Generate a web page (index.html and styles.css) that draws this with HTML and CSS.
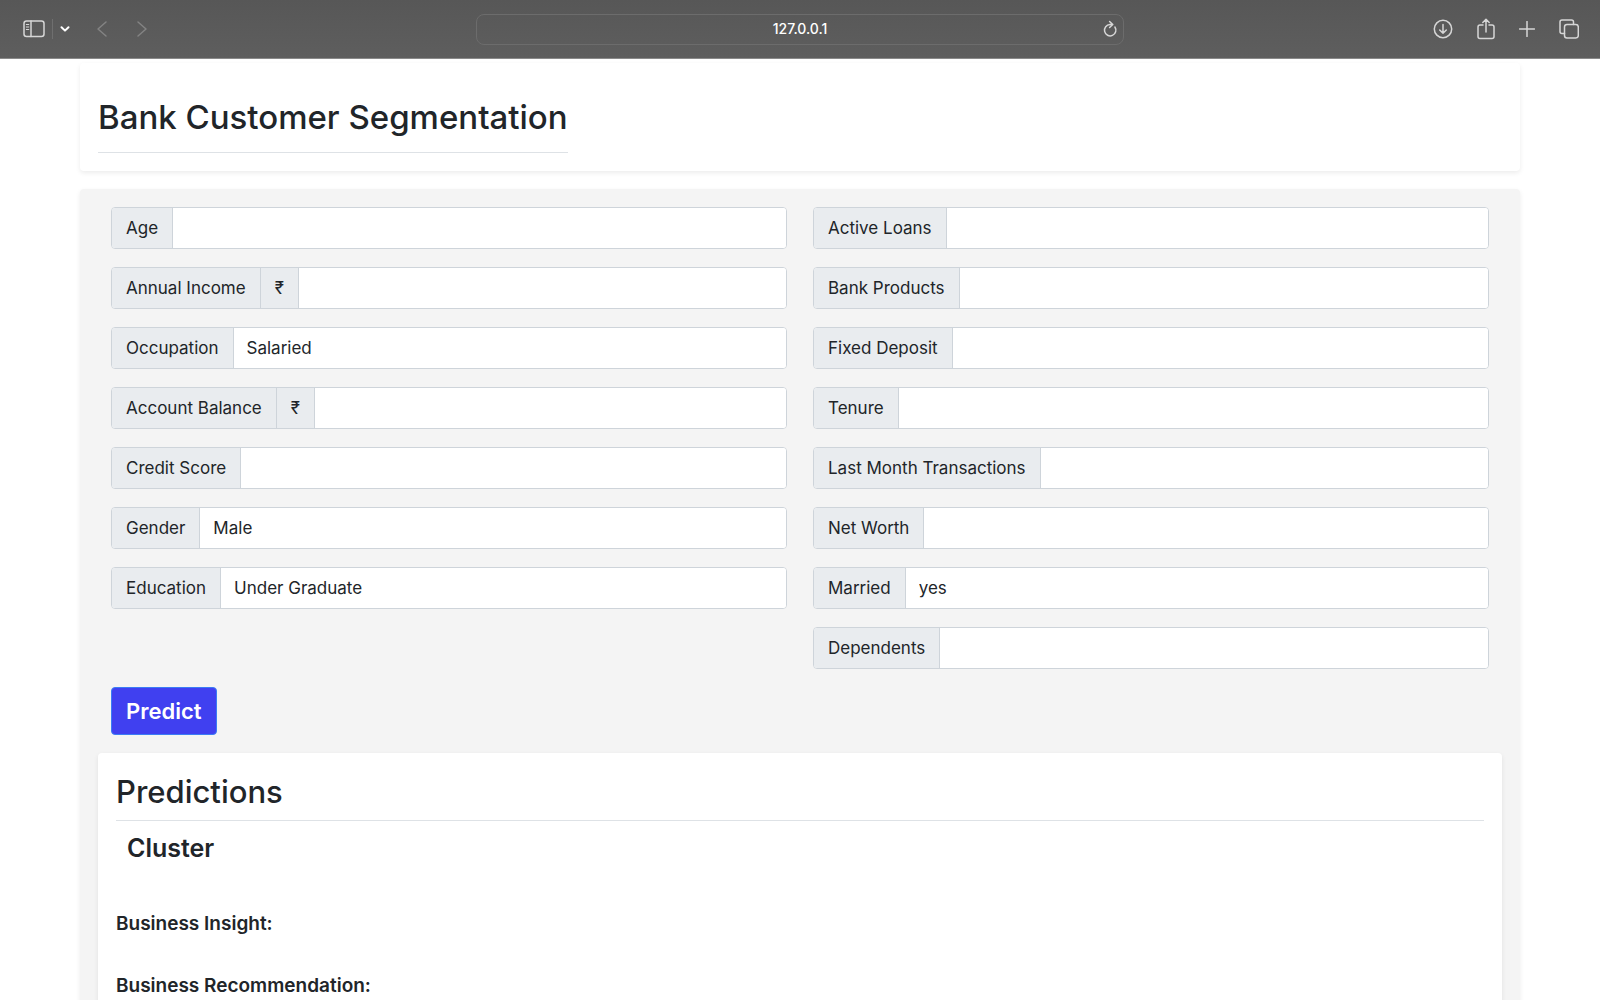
FILE: index.html
```html
<!DOCTYPE html>
<html lang="en">
<head>
<meta charset="utf-8">
<meta name="viewport" content="width=device-width, initial-scale=1">
<title>Bank Customer Segmentation</title>
<link rel="stylesheet" href="styles.css">
</head>
<body>
<header class="toolbar">
  <div class="tools tools-left">
    <button class="tool" type="button" aria-label="Show sidebar"><svg width="22" height="18" viewBox="0 0 22 18"><rect x="1" y="1" width="20" height="15.500" rx="2.500"/><path d="M8 1v15.500"/><path class="thin" d="M3.300 4.500h2.500M3.300 7h2.500M3.300 9.500h2.500"/></svg></button>
    <span class="divider"></span>
    <button class="tool tool-bright" type="button" aria-label="Tab groups"><svg width="10" height="8" viewBox="0 0 10 8"><path d="M1.500 2.200 5 5.600l3.500-3.400"/></svg></button>
    <button class="tool tool-dim tool-back" type="button" aria-label="Back"><svg width="12" height="18" viewBox="0 0 12 18"><path d="M10 2 2 9l8 7"/></svg></button>
    <button class="tool tool-dim tool-forward" type="button" aria-label="Forward"><svg width="12" height="18" viewBox="0 0 12 18"><path d="m2 2 8 7-8 7"/></svg></button>
  </div>
  <div class="address">
    <input class="address-input" type="text" value="127.0.0.1" aria-label="Address">
    <button class="tool reload" type="button" aria-label="Reload"><svg width="16" height="18" viewBox="0 0 16 18"><path d="M12.900 7A5.700 5.700 0 1 1 8 4.500h2.500M7.600 1.500l3.200 3-3.200 3"/></svg></button>
  </div>
  <div class="tools tools-right">
    <button class="tool" type="button" aria-label="Downloads"><svg width="20" height="20" viewBox="0 0 20 20"><circle cx="10" cy="10" r="8.700"/><path d="M10 5.500v8.700M6.700 11l3.300 3.300 3.300-3.300"/></svg></button>
    <button class="tool" type="button" aria-label="Share"><svg width="18" height="22" viewBox="0 0 18 22"><path d="M6 7H3Q1 7 1 9v9.500q0 2 2 2h12q2 0 2-2V9q0-2-2-2h-3M9 14V1.500M5.800 4.500 9 1.300l3.200 3.200"/></svg></button>
    <button class="tool" type="button" aria-label="New tab"><svg width="16" height="16" viewBox="0 0 16 16"><path d="M8 .500v15M.500 8h15"/></svg></button>
    <button class="tool" type="button" aria-label="Tab overview"><svg width="20" height="20" viewBox="0 0 20 20"><rect x="5.500" y="5.500" width="13.800" height="13.500" rx="2.500"/><path d="M5.500 14.500H3q-2 0-2-2V3q0-2 2-2h9.500q2 0 2 2v2.500"/></svg></button>
  </div>
</header>
<main class="page">
  <section class="card card-title">
    <h1 class="title">Bank Customer Segmentation</h1>
  </section>
  <section class="card card-form">
    <form class="form">
      <div class="columns">
        <div class="column">
          <div class="group"><label class="tag" for="age">Age</label><input class="control" id="age" type="text"></div>
          <div class="group"><label class="tag" for="income">Annual Income</label><span class="tag">₹</span><input class="control" id="income" type="text"></div>
          <div class="group"><label class="tag" for="occupation">Occupation</label><select class="control" id="occupation"><option>Salaried</option></select></div>
          <div class="group"><label class="tag" for="balance">Account Balance</label><span class="tag">₹</span><input class="control" id="balance" type="text"></div>
          <div class="group"><label class="tag" for="score">Credit Score</label><input class="control" id="score" type="text"></div>
          <div class="group"><label class="tag" for="gender">Gender</label><select class="control" id="gender"><option>Male</option></select></div>
          <div class="group"><label class="tag" for="education">Education</label><select class="control" id="education"><option>Under Graduate</option></select></div>
        </div>
        <div class="column">
          <div class="group"><label class="tag" for="loans">Active Loans</label><input class="control" id="loans" type="text"></div>
          <div class="group"><label class="tag" for="products">Bank Products</label><input class="control" id="products" type="text"></div>
          <div class="group"><label class="tag" for="deposit">Fixed Deposit</label><input class="control" id="deposit" type="text"></div>
          <div class="group"><label class="tag" for="tenure">Tenure</label><input class="control" id="tenure" type="text"></div>
          <div class="group"><label class="tag" for="transactions">Last Month Transactions</label><input class="control" id="transactions" type="text"></div>
          <div class="group"><label class="tag" for="worth">Net Worth</label><input class="control" id="worth" type="text"></div>
          <div class="group"><label class="tag" for="married">Married</label><select class="control" id="married"><option>yes</option></select></div>
          <div class="group"><label class="tag" for="dependents">Dependents</label><input class="control" id="dependents" type="text"></div>
        </div>
      </div>
      <button class="predict" type="button">Predict</button>
    </form>
    <section class="card card-results">
      <h2 class="results-title">Predictions</h2>
      <h3 class="cluster">Cluster</h3>
      <h4 class="result">Business Insight:</h4>
      <h4 class="result">Business Recommendation:</h4>
    </section>
  </section>
</main>
</body>
</html>
```
FILE: styles.css
```css
* {
  box-sizing: border-box;
}

body {
  margin: 0;
  height: 100vh;
  display: flex;
  flex-direction: column;
  background: #fff;
  color: #212529;
  font-family: Inter, "Liberation Sans", sans-serif;
  font-size: 17px;
  line-height: 26px;
}

h1, h2, h3, h4 {
  margin: 0;
}

button, input, select {
  font: inherit;
  color: inherit;
}

/* Browser toolbar */
.toolbar {
  flex: none;
  display: grid;
  grid-template-columns: 1fr 648px 1fr;
  align-items: center;
  height: 59px;
  padding: 0 20px;
  background: linear-gradient(#575757, #5e5e5e);
  border-bottom: 1px solid #8a8a8a;
}

.tools {
  display: flex;
  align-items: center;
}

.tools-left {
  padding-left: 3px;
}

.tools-right {
  justify-content: flex-end;
  gap: 24px;
  padding-right: 1px;
}

.tool {
  display: flex;
  padding: 0;
  border: 0;
  background: none;
  color: #d6d6d6;
}

.tool svg {
  fill: none;
  stroke: currentColor;
  stroke-width: 1.5;
  stroke-linecap: round;
  stroke-linejoin: round;
}

.tool .thin {
  stroke-width: 1;
}

.tool-bright {
  color: #fff;
}

.tool-bright svg {
  stroke-width: 2;
}

.tool-dim {
  color: #838383;
}

.divider {
  width: 1px;
  height: 20px;
  margin: 0 7px;
  background: #6f6f6f;
}

.tool-back {
  margin-left: 26px;
}

.tool-forward {
  margin-left: 28px;
}

.address {
  display: flex;
  align-items: center;
  height: 31px;
  border: 1px solid #6c6c6c;
  border-radius: 8px;
  padding: 0 5px;
}

.address-input {
  flex: 1;
  min-width: 0;
  padding: 0 0 0 16px;
  border: 0;
  background: none;
  color: #fff;
  font-size: 14px;
  font-weight: 500;
  line-height: 20px;
  text-align: center;
}

/* Page */
.page {
  flex: 1;
  min-height: 0;
  overflow-y: auto;
  scrollbar-width: none;
  padding: 4px 5% 0;
}

.card {
  border-radius: 4px;
  padding: 18px;
  background: #fff;
  box-shadow: 0 2px 5px rgba(0, 0, 0, 0.08);
}

.card-title {
  margin-bottom: 18px;
}

.title {
  display: inline-block;
  padding: 14px 0 13px;
  border-bottom: 1px solid #dee2e6;
  font-size: 33px;
  font-weight: 500;
  line-height: 44px;
  vertical-align: top;
}

.card-form {
  background: #f4f4f4;
}

.form {
  padding: 0 13px;
  margin-bottom: 18px;
}

.columns {
  display: grid;
  grid-template-columns: 1fr 1fr;
  gap: 26px;
  margin-bottom: 18px;
}

.column {
  display: flex;
  flex-direction: column;
  gap: 18px;
}

.group {
  display: flex;
  height: 42px;
  border: 1px solid #ced4da;
  border-radius: 4px;
  background: #fff;
  overflow: hidden;
}

.tag {
  display: flex;
  align-items: center;
  padding: 0 14px;
  border-right: 1px solid #ced4da;
  background: #e9ecef;
  white-space: nowrap;
}

.control {
  flex: 1;
  min-width: 0;
  padding: 0 13px;
  border: 0;
  border-radius: 0;
  background: #fff;
  appearance: none;
}

.predict {
  display: block;
  padding: 7px 14px;
  border: 1px solid #3b7cf5;
  border-radius: 4px;
  background: #4040f0;
  color: #fff;
  font-size: 22px;
  font-weight: 600;
  line-height: 32px;
}

.card-results {
  padding-bottom: 36px;
}

.results-title {
  padding-bottom: 7px;
  border-bottom: 1px solid #dee2e6;
  font-size: 31px;
  font-weight: 500;
  line-height: 42px;
}

.cluster {
  padding: 12px 11px;
  font-size: 25px;
  font-weight: 600;
  line-height: 30px;
}

.result {
  padding: 36px 0 0;
  font-size: 19px;
  font-weight: 600;
  line-height: 26px;
}
```
